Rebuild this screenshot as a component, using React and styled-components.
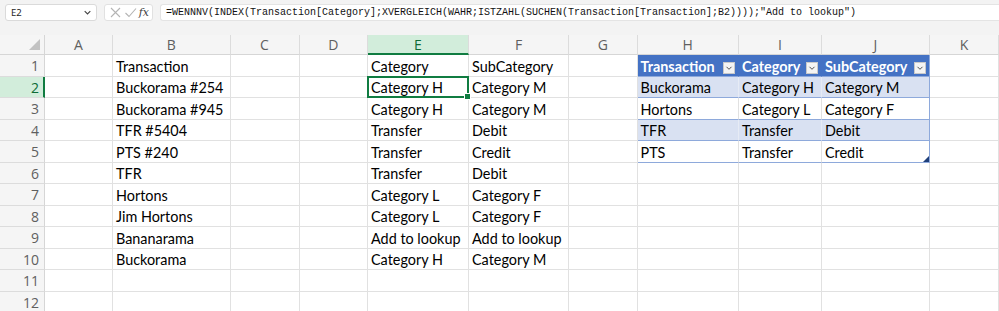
import React from "react";
import styled, { createGlobalStyle, css } from "styled-components";

const GlobalStyle = createGlobalStyle`
  html, body { margin: 0; padding: 0; background: #ffffff; }
  body { width: 999px; height: 311px; overflow: hidden; }
  * { box-sizing: border-box; }
`;

const Page = styled.div`
  width: 999px;
  height: 311px;
  overflow: hidden;
  display: flex;
  flex-direction: column;
  background: #f3f3f3;
`;

const FormulaBar = styled.div`
  height: 35px;
  flex: none;
  display: flex;
  align-items: flex-start;
  padding: 4px 0 0 5px;
  gap: 7px;
  background: #f3f3f3;
`;

const NameBox = styled.div`
  width: 92px;
  height: 17px;
  background: #ffffff;
  border: 1px solid #dadada;
  border-radius: 3px;
  display: flex;
  align-items: center;
  justify-content: space-between;
  padding: 0 4px 0 5px;
  font-family: "Noto Sans", sans-serif;
  font-size: 9.5px;
  color: #262626;
`;

const IconBox = styled.div`
  width: 49px;
  height: 17px;
  background: #ffffff;
  border: 1px solid #e1e1e1;
  border-radius: 3px;
  display: flex;
  align-items: center;
  justify-content: space-between;
  padding: 0 3px 0 4px;
`;

const Fx = styled.span`
  font-family: "DejaVu Serif", "Liberation Serif", serif;
  font-style: italic;
  font-size: 11px;
  color: #404040;
  line-height: 1;
`;

const FormulaInput = styled.div`
  flex: 1;
  height: 17px;
  background: #ffffff;
  border: 1px solid #e4e4e4;
  border-right: none;
  border-radius: 3px 0 0 3px;
  display: flex;
  align-items: center;
  padding-left: 5px;
  font-family: "Liberation Mono", monospace;
  font-size: 10px;
  color: #111111;
  white-space: pre;
  overflow: hidden;
`;

const Sheet = styled.div`
  flex: 1;
  display: grid;
  grid-template-columns: 45px 68px 117.5px 69px 68.5px 101px 100px 68.5px 101.5px 83px 108px 1fr;
  grid-template-rows: 20px repeat(12, 21.5px);
  background: #ffffff;
`;

const Corner = styled.div`
  background: #f5f5f5;
  border-right: 1px solid #d6d6d6;
  border-bottom: 1px solid #d6d6d6;
  display: flex;
  align-items: flex-end;
  justify-content: flex-end;
  padding: 0 4px 4px 0;
`;

const CornerTriangle = styled.div`
  width: 0;
  height: 0;
  border-left: 11px solid transparent;
  border-bottom: 11px solid #c2c2c2;
`;

const ColHeader = styled.div`
  background: ${(p) => (p.$active ? "#d2eddb" : "#f5f5f5")};
  border-right: 1px solid #dcdcdc;
  border-bottom: ${(p) => (p.$active ? "2px solid #107c41" : "1px solid #d6d6d6")};
  color: ${(p) => (p.$active ? "#0e6b36" : "#5f5f5f")};
  font-family: "Open Sans", sans-serif;
  font-size: 14px;
  display: flex;
  align-items: center;
  justify-content: center;
  padding-top: ${(p) => (p.$active ? "1px" : "0")};
`;

const RowHeader = styled.div`
  background: ${(p) => (p.$active ? "#d2eddb" : "#f5f5f5")};
  border-right: ${(p) => (p.$active ? "2px solid #107c41" : "1px solid #d6d6d6")};
  border-bottom: 1px solid #dcdcdc;
  color: ${(p) => (p.$active ? "#0e6b36" : "#5f5f5f")};
  font-family: "Open Sans", sans-serif;
  font-size: 14px;
  display: flex;
  align-items: center;
  justify-content: flex-end;
  padding: 1px ${(p) => (p.$active ? "4px" : "5px")} 0 0;
`;

const cellVariants = {
  plain: css`
    background: #ffffff;
    color: #000000;
  `,
  head: css`
    background: #4472c4;
    color: #ffffff;
    font-weight: 700;
    border-right-color: #4472c4;
    border-bottom-color: #8ea9db;
  `,
  band: css`
    background: #d9e1f2;
    color: #000000;
    border-bottom-color: #8ea9db;
    border-right-color: #e6ebf5;
  `,
  white: css`
    background: #ffffff;
    color: #000000;
    border-bottom-color: #8ea9db;
  `,
};

const Cell = styled.div`
  position: relative;
  border-right: 1px solid #e1e1e1;
  border-bottom: 1px solid #e1e1e1;
  font-family: Lato, "Noto Sans", sans-serif;
  font-size: 14.4px;
  display: flex;
  align-items: center;
  padding: 2px 0 0 3px;
  white-space: nowrap;
  ${(p) => cellVariants[p.$variant || "plain"]}
  ${(p) =>
    p.$tableEdge &&
    css`
      border-right: 1px solid #8ea9db;
    `}
  ${(p) =>
    p.$selected &&
    css`
      &::after {
        content: "";
        position: absolute;
        left: -1px;
        top: -1px;
        right: -1px;
        bottom: -1px;
        border: 2px solid #107c41;
        pointer-events: none;
      }
      &::before {
        content: "";
        position: absolute;
        right: -3px;
        bottom: -3px;
        width: 5px;
        height: 5px;
        background: #107c41;
        border: 1px solid #ffffff;
        z-index: 2;
      }
    `}
  ${(p) =>
    p.$resize &&
    css`
      &::after {
        content: "";
        position: absolute;
        right: 0;
        bottom: 0;
        width: 0;
        height: 0;
        border-left: 6px solid transparent;
        border-bottom: 6px solid #1f3f7a;
      }
    `}
`;

const FilterButton = styled.span`
  position: absolute;
  right: 3px;
  bottom: 2px;
  width: 12px;
  height: 12px;
  background: #f4f4f4;
  border: 1px solid #c9c9c9;
  display: flex;
  align-items: center;
  justify-content: center;
`;

const Chevron = ({ size = 8, color = "#505050" }) => (
  <svg width={size} height={size} viewBox="0 0 8 8">
    <path d="M1.5 2.8 L4 5.3 L6.5 2.8" fill="none" stroke={color} strokeWidth="1" />
  </svg>
);

const CrossIcon = () => (
  <svg width="13" height="13" viewBox="0 0 13 13">
    <path d="M2 2 L11 11 M11 2 L2 11" stroke="#b4b4b4" strokeWidth="1.1" fill="none" />
  </svg>
);

const CheckIcon = () => (
  <svg width="13" height="13" viewBox="0 0 13 13">
    <path d="M1.5 7 L5 10.5 L12 2.5" stroke="#b4b4b4" strokeWidth="1.1" fill="none" />
  </svg>
);

const columns = ["A", "B", "C", "D", "E", "F", "G", "H", "I", "J", "K"];

const leftData = [
  ["Transaction", "Category", "SubCategory"],
  ["Buckorama #254", "Category H", "Category M"],
  ["Buckorama #945", "Category H", "Category M"],
  ["TFR #5404", "Transfer", "Debit"],
  ["PTS #240", "Transfer", "Credit"],
  ["TFR", "Transfer", "Debit"],
  ["Hortons", "Category L", "Category F"],
  ["Jim Hortons", "Category L", "Category F"],
  ["Bananarama", "Add to lookup", "Add to lookup"],
  ["Buckorama", "Category H", "Category M"],
  ["", "", ""],
  ["", "", ""],
];

const tableData = [
  ["Transaction", "Category", "SubCategory"],
  ["Buckorama", "Category H", "Category M"],
  ["Hortons", "Category L", "Category F"],
  ["TFR", "Transfer", "Debit"],
  ["PTS", "Transfer", "Credit"],
];

const formula =
  '=WENNNV(INDEX(Transaction[Category];XVERGLEICH(WAHR;ISTZAHL(SUCHEN(Transaction[Transaction];B2))));"Add to lookup")';

function tableVariant(r) {
  if (r === 0) return "head";
  return r % 2 === 1 ? "band" : "white";
}

export default function App() {
  const rows = leftData.map((row, r) => {
    const inTable = r < tableData.length;
    const tv = inTable ? tableVariant(r) : "plain";
    const cells = [];
    cells.push(
      <RowHeader key="rh" $active={r === 1}>
        {r + 1}
      </RowHeader>
    );
    cells.push(<Cell key="A" />);
    cells.push(<Cell key="B">{row[0]}</Cell>);
    cells.push(<Cell key="C" />);
    cells.push(<Cell key="D" />);
    cells.push(
      <Cell key="E" $selected={r === 1}>
        {row[1]}
      </Cell>
    );
    cells.push(<Cell key="F">{row[2]}</Cell>);
    cells.push(<Cell key="G" />);
    ["H", "I", "J"].forEach((col, ci) => {
      cells.push(
        <Cell
          key={col}
          $variant={inTable ? tv : "plain"}
          $tableEdge={inTable && ci === 2}
          $resize={inTable && r === tableData.length - 1 && ci === 2}
        >
          {inTable ? tableData[r][ci] : ""}
          {inTable && r === 0 && (
            <FilterButton>
              <Chevron />
            </FilterButton>
          )}
        </Cell>
      );
    });
    cells.push(<Cell key="K" />);
    return <React.Fragment key={r}>{cells}</React.Fragment>;
  });

  return (
    <>
      <GlobalStyle />
      <Page>
        <FormulaBar>
          <NameBox>
            <span>E2</span>
            <Chevron size={9} color="#444" />
          </NameBox>
          <IconBox>
            <CrossIcon />
            <CheckIcon />
            <Fx>fx</Fx>
          </IconBox>
          <FormulaInput>{formula}</FormulaInput>
        </FormulaBar>
        <Sheet>
          <Corner>
            <CornerTriangle />
          </Corner>
          {columns.map((c) => (
            <ColHeader key={c} $active={c === "E"}>
              {c}
            </ColHeader>
          ))}
          {rows}
        </Sheet>
      </Page>
    </>
  );
}
